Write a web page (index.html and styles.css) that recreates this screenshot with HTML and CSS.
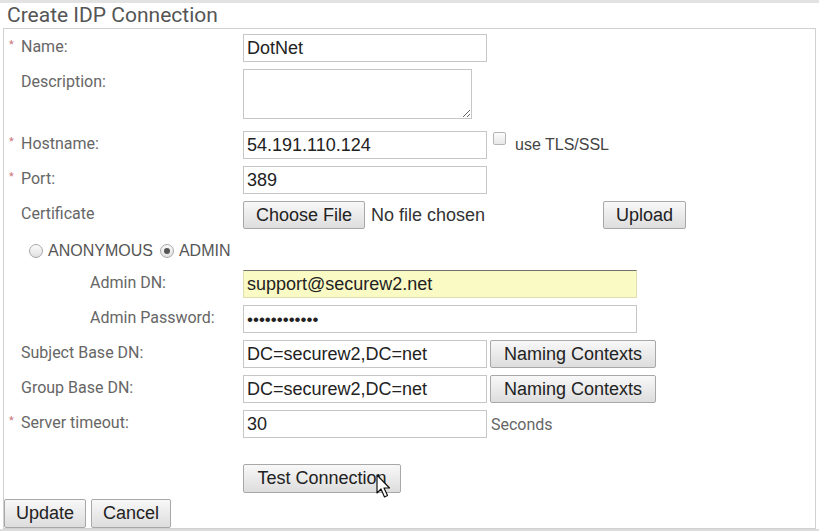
FILE: index.html
```html
<!DOCTYPE html>
<html lang="en">
<head>
<meta charset="UTF-8" />
<title>Create IDP Connection</title>
<link rel="stylesheet" href="styles.css">
</head>
<body>
  <div class="topline"></div>
  <h1 class="title">Create IDP Connection</h1>

  <form class="panel">
    <div class="row">
      <label class="lbl"><span class="req">*</span>Name:</label>
      <input class="txt" type="text" value="DotNet">
    </div>

    <div class="row row-desc">
      <label class="lbl"><span class="req"></span>Description:</label>
      <textarea class="area"></textarea>
    </div>

    <div class="row">
      <label class="lbl"><span class="req">*</span>Hostname:</label>
      <input class="txt" type="text" value="54.191.110.124">
      <span class="chk"></span>
      <span class="chk-text">use TLS/SSL</span>
    </div>

    <div class="row">
      <label class="lbl"><span class="req">*</span>Port:</label>
      <input class="txt" type="text" value="389">
    </div>

    <div class="row">
      <label class="lbl"><span class="req"></span>Certificate</label>
      <button class="btn btn-file" type="button">Choose File</button>
      <span class="nofile">No file chosen</span>
      <button class="btn btn-upload" type="button">Upload</button>
    </div>

    <div class="radios">
      <span class="radio"></span><span class="radio-text">ANONYMOUS</span>
      <span class="radio checked"></span><span class="radio-text">ADMIN</span>
    </div>

    <div class="row">
      <label class="lbl lbl-sub">Admin DN:</label>
      <input class="txt txt-wide txt-fill" type="text" value="support@securew2.net">
    </div>

    <div class="row">
      <label class="lbl lbl-sub">Admin Password:</label>
      <input class="txt txt-wide pw" type="password" value="............">
    </div>

    <div class="row">
      <label class="lbl"><span class="req"></span>Subject Base DN:</label>
      <input class="txt" type="text" value="DC=securew2,DC=net">
      <button class="btn btn-naming" type="button">Naming Contexts</button>
    </div>

    <div class="row">
      <label class="lbl"><span class="req"></span>Group Base DN:</label>
      <input class="txt" type="text" value="DC=securew2,DC=net">
      <button class="btn btn-naming" type="button">Naming Contexts</button>
    </div>

    <div class="row">
      <label class="lbl"><span class="req">*</span>Server timeout:</label>
      <input class="txt" type="text" value="30">
      <span class="unit">Seconds</span>
    </div>

    <div class="row row-test">
      <span class="lbl"></span>
      <span class="test-wrap">
        <button class="btn btn-test" type="button">Test Connection</button>
        <svg class="cursor" width="16" height="26" viewBox="0 0 16 26">
          <path d="M1 1 L1 19 L5 15 L8.5 23 L11.5 21.5 L8 14 L13.5 14 Z" fill="#fff" stroke="#111" stroke-width="1.2" stroke-linejoin="round"/>
        </svg>
      </span>
    </div>

    <div class="footer">
      <button class="btn btn-foot" type="button">Update</button>
      <button class="btn btn-foot btn-cancel" type="button">Cancel</button>
    </div>
  </form>
  <div class="bottomline"></div>
</body>
</html>
```

FILE: styles.css
```css
body, html {
  margin: 0; padding: 0;
  background: #fff;
  font-family: Roboto, "Liberation Sans", Arial, sans-serif;
}

.topline {
  height: 3px;
  background: #e2e2e2;
}

.title {
  margin: 0;
  height: 25px;
  line-height: 24px;
  padding-left: 7px;
  font-size: 21px;
  font-weight: normal;
  color: #555;
}

.panel {
  margin: 0 0 0 3px;
  width: 811px;
  height: 494px;
  border: 1px solid #d0d0d0;
  padding-top: 5px;
  box-sizing: content-box;
}
.bottomline {
  height: 2px;
  background: #dcdcdc;
}

.row {
  display: flex;
  align-items: flex-start;
  height: 28px;
  margin-bottom: 7px;
}
.row-desc {
  height: 50px;
  margin-bottom: 12px;
}
.row-test {
  height: 29px;
  margin-top: 26px;
  margin-bottom: 6px;
}

.lbl {
  flex: 0 0 234px;
  padding-left: 5px;
  padding-top: 3px;
  font-size: 16px;
  color: #666;
}
.lbl-sub {
  flex-basis: 153px;
  padding-left: 86px;
}
.req {
  display: inline-block;
  width: 12px;
  font-size: 11px;
  color: #c77;
  vertical-align: top;
  margin-top: 1px;
}

.txt {
  width: 244px;
  height: 28px;
  box-sizing: border-box;
  margin: 0;
  padding: 1px 3px 0;
  border: 1px solid #c6c6c6;
  font-family: "Liberation Sans", Arial, sans-serif;
  font-size: 18px;
  color: #222;
  background: #fff;
}
.txt-wide {
  width: 394px;
}
.txt-fill {
  background: #fafac4;
  border-color: #dedeb0;
  border-top-color: #6e6e6e;
}
.pw {
  font-size: 17px;
  letter-spacing: 0;
}

.area {
  width: 229px;
  height: 50px;
  box-sizing: border-box;
  margin: 0;
  border: 1px solid #c6c6c6;
  resize: both;
}

.chk {
  width: 13px;
  height: 13px;
  box-sizing: border-box;
  margin: 1px 0 0 6px;
  border: 1px solid #b5b5b5;
  border-radius: 2px;
  background: linear-gradient(#fcfcfc, #e8e8e8);
}
.chk-text {
  margin: 5px 0 0 9px;
  font-family: "Liberation Sans", Arial, sans-serif;
  font-size: 16px;
  color: #444;
}

.btn {
  height: 28px;
  margin: 0;
  padding: 0;
  border: 1px solid #a8a8a8;
  border-radius: 2px;
  background: linear-gradient(#f8f8f8, #dddddd);
  font-family: "Liberation Sans", Arial, sans-serif;
  font-size: 18px;
  color: #222;
  cursor: pointer;
}
.btn-file {
  width: 122px;
}
.nofile {
  margin: 4px 0 0 6px;
  font-family: "Liberation Sans", Arial, sans-serif;
  font-size: 18px;
  color: #333;
}
.btn-upload {
  width: 83px;
  margin-left: 118px;
}
.btn-naming {
  width: 166px;
  margin-left: 3px;
}

.unit {
  margin: 5px 0 0 4px;
  font-size: 16px;
  color: #666;
}

.radios {
  display: flex;
  align-items: center;
  height: 16px;
  margin: 14px 0 11px 25px;
}
.radio {
  width: 14px;
  height: 14px;
  box-sizing: border-box;
  border: 1px solid #a8a8a8;
  border-radius: 50%;
  background: linear-gradient(#fbfbfb, #e0e0e0);
  position: relative;
}
.radio.checked::after {
  content: "";
  position: absolute;
  left: 3px; top: 3px;
  width: 6px; height: 6px;
  border-radius: 50%;
  background: #555;
}
.radio-text {
  margin: 0 7px 0 5px;
  font-family: "Liberation Sans", Arial, sans-serif;
  font-size: 16px;
  color: #555;
}

.test-wrap {
  position: relative;
  display: inline-block;
}
.btn-test {
  width: 158px;
  height: 29px;
}
.cursor {
  position: absolute;
  left: 133px;
  top: 10px;
}

.footer {
  display: flex;
  gap: 5px;
}
.btn-foot {
  width: 82px;
  height: 29px;
}
.btn-cancel {
  width: 80px;
}
```
